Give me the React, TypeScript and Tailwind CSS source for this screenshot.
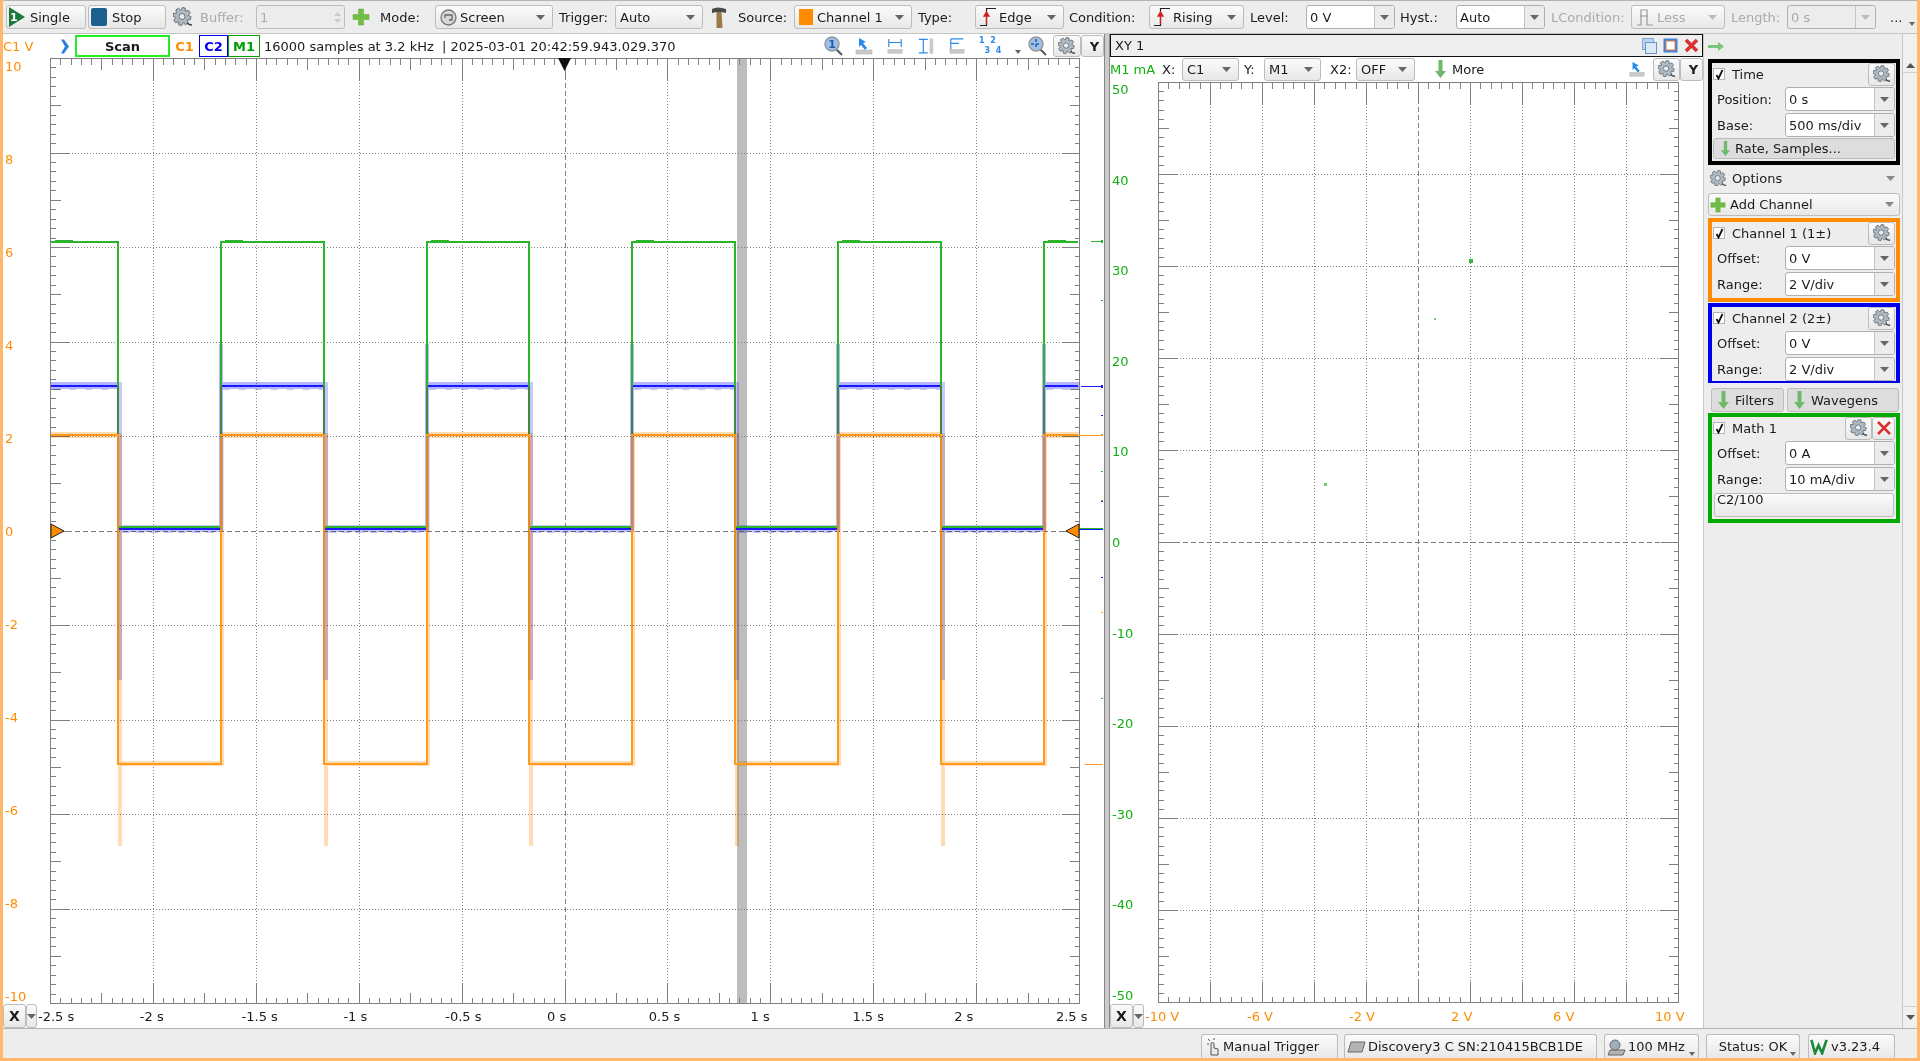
import React from 'react';

const range = (n: number) => Array.from({ length: n }, (_, i) => i);

function gearPath(cx: number, cy: number, ro: number, ri: number, teeth: number) {
  const pts: string[] = [];
  for (let i = 0; i < teeth; i++) {
    const a = (i / teeth) * Math.PI * 2 + 0.2;
    const w = Math.PI / teeth;
    [[a - w * 0.95, ri], [a - w * 0.45, ro], [a + w * 0.45, ro], [a + w * 0.95, ri]].forEach(([t, r]) => {
      pts.push(`${(cx + Math.cos(t) * r).toFixed(2)},${(cy + Math.sin(t) * r).toFixed(2)}`);
    });
  }
  return 'M' + pts.join('L') + 'Z';
}

const Gear = ({ s = 18 }: { s?: number }) => (
  <svg width={s} height={s} viewBox="0 0 20 20" className="shrink-0">
    <path d={gearPath(9, 9.500, 9, 6.300, 8)} fill="#aeb9c2" stroke="#66737d" strokeWidth="1" />
    <circle cx="9" cy="9.500" r="3" fill="#e8ecef" stroke="#66737d" strokeWidth="1" />
    <path d="M14 16q2 2 5 2" stroke="#444" strokeWidth="1.500" fill="none" />
  </svg>
);
const Caret = ({ c = '#666' }: { c?: string }) => (
  <svg width="9" height="5" viewBox="0 0 9 5" className="shrink-0"><path d="M0 0h9L4.500 5z" fill={c} /></svg>
);
const Check = () => (
  <span className="w-[12px] h-[12px] bg-white border border-[#b5b5b5] flex items-center justify-center shrink-0">
    <svg width="9" height="11" viewBox="0 0 9 11"><path d="M1.500 6l2 3.500L7.500 1" fill="none" stroke="#111" strokeWidth="1.800" /></svg>
  </span>
);
const Plus = ({ s = 18 }: { s?: number }) => (
  <svg width={s} height={s} viewBox="0 0 18 18" className="shrink-0"><path d="M6.500 1h5v5.500H17v5h-5.500V17h-5v-5.500H1v-5h5.500z" fill="#72bd45" stroke="#5da535" strokeWidth="0.500" /></svg>
);
const DownArrow = ({ h = 18 }: { h?: number }) => (
  <svg width="11" height={h} viewBox="0 0 11 18" className="shrink-0"><path d="M3.500 0h4v11H11l-5.500 7L0 11h3.500z" fill="#6fb96a" /></svg>
);
const Ruler = ({ x = 0 }: { x?: number }) => (
  <g transform={`translate(${x},0)`}>
    <rect x="0" y="13" width="16" height="4" fill="#c9c9c9" stroke="#aaa" strokeWidth="0.500" />
  </g>
);
const Magnify = ({ label }: { label?: string }) => (
  <svg width="20" height="20" viewBox="0 0 20 20" className="shrink-0 block">
    <path d="M12 13l6 6" stroke="#555" strokeWidth="2" />
    <circle cx="8" cy="8" r="7" fill="#9fbfe6" stroke="#9a9a9a" strokeWidth="1.500" />
    {label ? <text x="8" y="12" textAnchor="middle" fontSize="11" fontWeight="bold" fill="#1d5fae">{label}</text> : <path d="M8 3v10M3 8h10" stroke="#1d5fae" strokeWidth="1.500" strokeDasharray="3 2" />}
  </svg>
);
const Hammer = () => (
  <svg width="16" height="22" viewBox="0 0 16 22" className="shrink-0">
    <path d="M5.500 6h5l1 16h-6z" fill="#9a7a45" />
    <path d="M1 3q5-3 14 0v4q-7-2-14 0z" fill="#4b4b48" />
  </svg>
);
const StepIcon = () => (
  <svg width="16" height="20" viewBox="0 0 16 20" className="shrink-0">
    <path d="M0 18.500h6.500v-17H16" fill="none" stroke="#222" strokeWidth="1.200" />
    <path d="M6.500 17V8M4 9l2.500-4L9 9z" fill="#d02020" stroke="#d02020" strokeWidth="1.300" />
  </svg>
);
const SmallCaret = ({ className = '' }: { className?: string }) => (
  <svg width="6" height="4" viewBox="0 0 6 4" className={`block shrink-0 ${className}`}><path d="M0 0h6L3 4z" fill="#666" /></svg>
);

const Btn = ({ className = '', children }: { className?: string; children?: React.ReactNode }) => (
  <div className={`flex items-center shrink-0 rounded-[3px] border border-[#bcbcbc] bg-gradient-to-b from-[#fbfbfb] to-[#e8e8e8] ${className}`}>{children}</div>
);
const Combo = ({ className = '', children, off }: { className?: string; children?: React.ReactNode; off?: boolean }) => (
  <Btn className={`justify-between pl-[4px] pr-[7px] ${className}`}>
    <span className={`flex items-center gap-[3px] whitespace-nowrap ${off ? 'text-[#aaaaaa]' : ''}`}>{children}</span>
    <Caret c={off ? '#bbb' : '#666'} />
  </Btn>
);
const Edit = ({ className = '', children, off }: { className?: string; children?: React.ReactNode; off?: boolean }) => (
  <div className={`flex shrink-0 rounded-[3px] border border-[#b0b0b0] overflow-hidden ${off ? 'bg-[#ececec] text-[#aaaaaa]' : 'bg-white'} ${className}`}>
    <span className="flex-1 pl-[3px] flex items-center whitespace-nowrap">{children}</span>
    <span className="w-[20px] border-l border-[#c4c4c4] bg-[#ececec] flex items-center justify-center"><Caret c={off ? '#bbb' : '#666'} /></span>
  </div>
);
const Lbl = ({ className = '', children, off }: { className?: string; children: React.ReactNode; off?: boolean }) => (
  <span className={`shrink-0 whitespace-nowrap ${off ? 'text-[#aaaaaa]' : ''} ${className}`}>{children}</span>
);

const Axes = ({ x0, x1, y0, y1, dx, dy, xSub, xMid, color = '#808080' }: any) => {
  const els: React.ReactNode[] = [];
  range(11).forEach(i => {
    const x = x0 + i * dx, y = y0 + i * dy;
    if (i > 0 && i < 10) {
      els.push(<line key={`gv${i}`} x1={x} x2={x} y1={y0} y2={y1} stroke={color} strokeDasharray={i === 5 ? '5 3' : '1 2'} />);
      els.push(<line key={`gh${i}`} x1={x0} x2={x1} y1={y} y2={y} stroke={color} strokeDasharray={i === 5 ? '5 3' : '1 2'} />);
    }
  });
  const nx = 10 * xSub;
  range(nx + 1).forEach(i => {
    const x = x0 + (i * dx) / xSub;
    const len = i % xSub === 0 ? 21 : xMid && i % (xSub / 2) === 0 ? 11 : 6;
    els.push(<line key={`tt${i}`} x1={x} x2={x} y1={y0} y2={y0 + len} stroke={color} />);
    els.push(<line key={`tb${i}`} x1={x} x2={x} y1={y1} y2={y1 - len} stroke={color} />);
  });
  range(101).forEach(i => {
    const y = y0 + (i * dy) / 10;
    const len = i % 10 === 0 ? 18 : i % 5 === 0 ? 10 : 5;
    els.push(<line key={`tl${i}`} x1={x0} x2={x0 + len} y1={y} y2={y} stroke={color} />);
    els.push(<line key={`tr${i}`} x1={x1} x2={x1 - len} y1={y} y2={y} stroke={color} />);
  });
  els.push(<rect key="frame" x={x0} y={y0} width={x1 - x0} height={y1 - y0} fill="none" stroke={color} strokeWidth="1.200" />);
  return <g shapeRendering="crispEdges">{els}</g>;
};

const edges = range(10).map(k => Math.round(118 + 102.85 * k));
const levelPath = (hi: number, lo: number) => {
  let d = `M51 ${hi}`;
  edges.forEach((x, k) => {
    d += `H${x}V${k % 2 === 0 ? lo : hi}`;
  });
  return d + 'H1078';
};

const ScopeChart = () => {
  const hiSegs: [number, number][] = [[51, edges[0]]];
  const loSegs: [number, number][] = [];
  edges.forEach((x, k) => {
    const nx = k < 9 ? edges[k + 1] : 1079;
    (k % 2 === 0 ? loSegs : hiSegs).push([x, nx]);
  });
  const ylabels = [10, 8, 6, 4, 2, 0, -2, -4, -6, -8, -10];
  return (
    <svg width="1101" height="947" viewBox="3 57 1101 947" className="block shrink-0 bg-white">
      <rect x="737" y="58" width="10" height="945" fill="#bdbdbd" />
      <Axes x0={50.5} x1={1079.5} y0={58.5} y1={1003.5} dx={102.9} dy={94.5} xSub={10} xMid />
      {ylabels.map((v, i) => (
        <text key={v} x="5" y={66 + i * 93 + 5} fontSize="13" fill="#ff8c00" fontFamily="DejaVu Sans">{v}</text>
      ))}
      <g className="mix-blend-multiply" shapeRendering="crispEdges">
        {hiSegs.map(([a, b], i) => <rect key={`bh${i}`} x={a} y="382" width={b - a} height="7" fill="#b4b4ff" />)}
        {hiSegs.map(([a, b], i) => <line key={`bn${i}`} x1={a + 2} x2={b} y1="389.500" y2="389.500" stroke="#c4c4ff" strokeDasharray="7 9" />)}
        {loSegs.map(([a, b], i) => <rect key={`bl${i}`} x={a + 2} y="525" width={b - a - 2} height="7" fill="#c4c4ff" />)}
        {loSegs.map(([a, b], i) => <line key={`bm${i}`} x1={a + 4} x2={b} y1="532.500" y2="532.500" stroke="#c4c4ff" strokeDasharray="8 6" />)}
        {edges.map((x, k) => k % 2 === 0
          ? <rect key={`bv${k}`} x={x} y="382" width="4" height="298" fill="#c8c8ff" />
          : <rect key={`bv${k}`} x={x - 2} y="344" width="4" height="188" fill="#b4b4ff" />)}
      </g>
      <g className="mix-blend-multiply" shapeRendering="crispEdges">
        {hiSegs.map(([a, b], i) => <rect key={`oh${i}`} x={a} y="432" width={b - a} height="6" fill="#ffdcb4" />)}
        {loSegs.map(([a, b], i) => <rect key={`ol${i}`} x={a} y="761" width={b - a + 3} height="5" fill="#ffdcb4" />)}
        {edges.map((x, k) => k % 2 === 0
          ? <rect key={`ov${k}`} x={x} y="433" width="4" height="413" fill="#ffdcb4" />
          : <rect key={`ov${k}`} x={x - 1} y="433" width="4" height="333" fill="#ffdcb4" />)}
      </g>
      <g shapeRendering="crispEdges">
        <path d={levelPath(386, 529)} fill="none" stroke="#1a1aff" strokeWidth="2" />
        <path d={levelPath(242, 527)} fill="none" stroke="#2ab52a" strokeWidth="2" />
        {hiSegs.map(([a], i) => <rect key={`gb${i}`} x={a + 4} y="240" width="18" height="1" fill="#2ab52a" />)}
        {edges.map(x => <rect key={`gd${x}`} x={x - 1} y="386" width="2" height="49" fill="#3f8a3f" />)}
        <path d={edges.reduce((d, x, k) => d + `H${x}V${k % 2 === 0 ? 764 : 435}`, 'M51 435') + 'H1078'} fill="none" stroke="#ff9a1f" strokeWidth="2" />
        {edges.map((x, k) => k % 2 === 0 && <rect key={`od${x}`} x={x - 1} y="436" width="2" height="244" fill="#e68c20" />)}
        {edges.map((x, k) => k % 2 === 1 && <rect key={`oe${x}`} x={x - 1} y="436" width="2" height="94" fill="#d98a30" />)}
      </g>
      <g shapeRendering="crispEdges">
        <rect x="1091" y="241" width="12" height="1" fill="#2ab52a" /><rect x="1101" y="240" width="2" height="3" fill="#2ab52a" />
        <rect x="1101" y="300" width="2" height="1" fill="#2ab52a" />
        <rect x="1081" y="386" width="22" height="1" fill="#1a1aff" /><rect x="1101" y="385" width="2" height="3" fill="#1a1aff" />
        <rect x="1101" y="415" width="2" height="1" fill="#1a1aff" />
        <rect x="1079" y="435" width="24" height="1" fill="#ff9a1f" /><rect x="1101" y="434" width="2" height="2" fill="#ff9a1f" />
        <rect x="1101" y="471" width="2" height="1" fill="#2ab52a" />
        <rect x="1101" y="500" width="2" height="1" fill="#ff9a1f" /><rect x="1101" y="501" width="2" height="1" fill="#1a1aff" />
        <rect x="1079" y="528" width="24" height="1" fill="#2ab52a" /><rect x="1079" y="529" width="24" height="1" fill="#1a1aff" />
        <rect x="1101" y="577" width="2" height="1" fill="#1a1aff" />
        <rect x="1101" y="612" width="2" height="1" fill="#ff9a1f" />
        <rect x="1101" y="698" width="2" height="1" fill="#2ab52a" />
        <rect x="1085" y="764" width="18" height="1" fill="#ff9a1f" />
      </g>
      <path d="M558 58h13l-6.500 13z" fill="#111" />
      <path d="M51 524l13 7-13 7z" fill="#ff8c00" stroke="#222" />
      <path d="M1079 524l-13 7 13 7z" fill="#ff8c00" stroke="#222" />
    </svg>
  );
};

const XYChart = () => {
  const labels = [50, 40, 30, 20, 10, 0, -10, -20, -30, -40, -50];
  return (
    <svg width="593" height="923" viewBox="1110 81 593 923" className="block shrink-0 bg-white">
      <Axes x0={1158.5} x1={1678.5} y0={82.5} y1={1002.5} dx={52} dy={92} xSub={5} />
      {labels.map((v, i) => (
        <text key={v} x="1112" y={89 + i * 90.6 + 5} fontSize="13" fill="#10b010" fontFamily="DejaVu Sans">{v}</text>
      ))}
      <rect x="1469" y="259" width="4" height="4" fill="#38b838" />
      <rect x="1434" y="318" width="2" height="2" fill="#70cc70" />
      <rect x="1324" y="483" width="3" height="3" fill="#70cc70" />
      <rect x="1288" y="540" width="2" height="1" fill="#a0dda0" />
    </svg>
  );
};

const AxisBtn = () => (
  <div className="flex shrink-0 h-[24px]">
    <Btn className="w-[23px] h-full justify-center font-bold text-[14px]">X</Btn>
    <Btn className="w-[11px] h-full justify-center"><Caret /></Btn>
  </div>
);

const Row = ({ label, value }: { label: string; value: string }) => (
  <div className="flex items-center h-[26px] shrink-0">
    <span className="w-[73px] pl-[5px] shrink-0">{label}</span>
    <Edit className="w-[110px] h-[24px]">{value}</Edit>
  </div>
);

const GearBtn = () => <Btn className="w-[27px] h-[23px] justify-center"><Gear s={18} /></Btn>;

const Title = ({ children, actions }: { children: React.ReactNode; actions?: React.ReactNode }) => (
  <div className="flex items-center h-[23px] shrink-0 pl-[1px] pb-[1px]">
    <Check />
    <span className="ml-[7px] flex-1">{children}</span>
    {actions ?? <span className="mr-[1px]"><GearBtn /></span>}
  </div>
);

export default function App() {
  const sLabels = ['-2.5 s', '-2 s', '-1.5 s', '-1 s', '-0.5 s', '0 s', '0.5 s', '1 s', '1.5 s', '2 s', '2.5 s'];
  const xyLabels = ['-10 V', '-6 V', '-2 V', '2 V', '6 V', '10 V'];
  return (
    <div className="w-[1920px] h-[1061px] overflow-hidden flex flex-col bg-[#ededed] border-l-[3px] border-r-[3px] border-b-[3px] border-[#ffb86b] text-[13px] leading-none text-[#1a1a1a] font-['DejaVu_Sans',sans-serif]">
      {/* toolbar */}
      <div className="h-[34px] shrink-0 border-t border-t-[#b4b4b4] border-b border-b-[#c4c4c4] flex items-center">
        <Btn className="ml-[3px] w-[80px] h-[24px] gap-[4px] pl-[1px]">
          <svg width="18" height="20" viewBox="0 0 18 20"><path d="M1 0l16 10L1 20z" fill="#1e7a3c" /><text x="2" y="14" fontSize="11" fontWeight="bold" fill="#fff">1</text></svg>
          Single
        </Btn>
        <Btn className="ml-[2px] w-[78px] h-[24px] gap-[5px] pl-[2px]">
          <span className="w-[16px] h-[18px] bg-[#1d5f8f] rounded-[2px]" />Stop
        </Btn>
        <span className="ml-[7px] w-[27px] shrink-0"><Gear s={20} /></span>
        <Lbl off className="w-[56px]">Buffer:</Lbl>
        <div className="w-[89px] h-[24px] shrink-0 rounded-[3px] border border-[#bcbcbc] bg-[#ececec] text-[#aaaaaa] flex items-center justify-between pl-[3px] pr-[3px]">1<span className="flex flex-col gap-[3px]"><svg width="7" height="4" viewBox="0 0 7 4"><path d="M0 4h7L3.500 0z" fill="#ccc" /></svg><svg width="7" height="4" viewBox="0 0 7 4"><path d="M0 0h7L3.500 4z" fill="#ccc" /></svg></span></div>
        <span className="ml-[7px] w-[28px] shrink-0"><Plus /></span>
        <Lbl className="w-[55px]">Mode:</Lbl>
        <Combo className="w-[118px] h-[24px]">
          <svg width="17" height="17" viewBox="0 0 17 17"><circle cx="8.500" cy="8.500" r="7.500" fill="#d8d8d8" stroke="#777" strokeWidth="1.300" /><path d="M5 9V6h7v5H9" fill="none" stroke="#666" strokeWidth="1.300" /></svg>
          Screen
        </Combo>
        <Lbl className="ml-[6px] w-[56px]">Trigger:</Lbl>
        <Combo className="w-[88px] h-[24px]">Auto</Combo>
        <span className="ml-[8px] w-[27px] shrink-0"><Hammer /></span>
        <Lbl className="w-[56px]">Source:</Lbl>
        <Combo className="w-[118px] h-[24px]"><span className="w-[14px] h-[16px] bg-[#ff8c00] mr-[1px]" />Channel 1</Combo>
        <Lbl className="ml-[6px] w-[57px]">Type:</Lbl>
        <Combo className="w-[89px] h-[24px]"><StepIcon />Edge</Combo>
        <Lbl className="ml-[5px] w-[80px]">Condition:</Lbl>
        <Combo className="w-[95px] h-[24px]"><StepIcon />Rising</Combo>
        <Lbl className="ml-[6px] w-[56px]">Level:</Lbl>
        <Edit className="w-[89px] h-[24px]">0 V</Edit>
        <Lbl className="ml-[5px] w-[56px]">Hyst.:</Lbl>
        <Edit className="w-[89px] h-[24px]">Auto</Edit>
        <Lbl off className="ml-[6px] w-[80px]">LCondition:</Lbl>
        <Combo off className="w-[94px] h-[24px]"><svg width="18" height="20" viewBox="0 0 18 20"><path d="M1 18h4V3h6v15h6M4 9h8" fill="none" stroke="#999" strokeWidth="1.200" /></svg>Less</Combo>
        <Lbl off className="ml-[6px] w-[56px]">Length:</Lbl>
        <Edit off className="w-[89px] h-[24px]">0 s</Edit>
        <Lbl className="ml-[14px]">...</Lbl>
        <SmallCaret className="ml-[7px] mt-[14px]" />
      </div>

      {/* main */}
      <div className="h-[994px] shrink-0 flex">
        {/* scope */}
        <div className="w-[1101px] shrink-0 flex flex-col bg-white">
          <div className="h-[23px] shrink-0 flex items-center pt-[1px]">
            <Lbl className="w-[42px] text-[#ff8c00]">C1 V</Lbl>
            <span className="w-[30px] shrink-0 pl-[15px]"><svg width="10" height="15" viewBox="0 0 10 14" className="block"><path d="M1 0h3l5 7-5 7H1l4-7z" fill="#2b7fe0" /></svg></span>
            <span className="w-[95px] h-[22px] shrink-0 border-2 border-[#22ee22] font-bold flex items-center justify-center">Scan</span>
            <span className="w-[29px] shrink-0 text-center font-bold text-[#ff8c00]">C1</span>
            <span className="w-[29px] h-[22px] shrink-0 border border-[#0000ee] font-bold text-[#0000ee] flex items-center justify-center">C2</span>
            <span className="w-[32px] h-[22px] shrink-0 border border-[#00a000] font-bold text-[#00a000] flex items-center justify-center">M1</span>
            <span className="ml-[4px] whitespace-pre w-[560px] shrink-0">16000 samples at 3.2 kHz  | 2025-03-01 20:42:59.943.029.370</span>
            <span className="w-[31px] shrink-0"><Magnify label="1" /></span>
            <span className="w-[32px] shrink-0"><svg width="18" height="19" viewBox="0 0 18 19" className="block"><path d="M4 1v9l2-2 4 5 2-2-4-5 3-1z" fill="#2b8ae8" /><Ruler x={1} /></svg></span>
            <span className="w-[30px] shrink-0"><svg width="16" height="19" viewBox="0 0 18 19" className="block"><path d="M2 1v9M16 1v9M2 5h14" stroke="#2b8ae8" strokeWidth="1.300" fill="none" /><Ruler x={1} /></svg></span>
            <span className="w-[32px] shrink-0"><svg width="18" height="19" viewBox="0 0 20 20" className="block"><path d="M2 2h10M2 17h10M7 2v15" stroke="#2b8ae8" strokeWidth="1.300" fill="none" /><rect x="14" y="1" width="4" height="17" fill="#c9c9c9" /></svg></span>
            <span className="w-[30px] shrink-0"><svg width="16" height="19" viewBox="0 0 18 19" className="block"><path d="M2 1h14M2 1v12M2 6h9" stroke="#2b8ae8" strokeWidth="1.300" fill="none" /><Ruler x={1} /></svg></span>
            <span className="w-[36px] shrink-0 text-[#2b8ae8] text-[8px] font-bold leading-[10px] whitespace-pre">1  2{'\n'}  3  4</span>
            <span className="w-[13px] shrink-0 pt-[12px]"><SmallCaret /></span>
            <span className="w-[25px] shrink-0"><Magnify /></span>
            <Btn className="w-[28px] h-[22px] justify-center"><Gear s={18} /></Btn>
            <Btn className="w-[23px] h-[22px] justify-center font-bold pl-[4px]">Y</Btn>
          </div>
          <ScopeChart />
          <div className="h-[24px] flex items-center">
            <AxisBtn />
            <div className="flex ml-[1px]">
              {sLabels.map(s => <span key={s} className="w-[101.8px] shrink-0 whitespace-nowrap">{s}</span>)}
            </div>
          </div>
        </div>
        {/* splitter */}
        <div className="w-[6px] shrink-0 bg-[#cccccc] border-x border-[#888888]" />
        {/* xy */}
        <div className="w-[593px] shrink-0 flex flex-col bg-white">
          <div className="h-[23px] shrink-0 border border-[#111111] bg-[#eeeeee] flex items-center pl-[4px] pr-[3px]">
            <span className="flex-1">XY 1</span>
            <svg width="15" height="16" viewBox="0 0 15 16" className="mr-[6px]"><rect x="0.500" y="0.500" width="11" height="11" fill="#bcd4ee" stroke="#7aa7d8" /><rect x="3.500" y="4.500" width="11" height="11" fill="#dbe8f6" stroke="#5f97d3" /></svg>
            <svg width="15" height="15" viewBox="0 0 15 15" className="mr-[6px]"><rect x="0.500" y="0.500" width="14" height="14" fill="#3f86d8" /><rect x="3" y="3" width="9" height="9" fill="#fff" stroke="#ee7733" /></svg>
            <svg width="15" height="15" viewBox="0 0 15 15"><path d="M2 2l11 11M13 2L2 13" stroke="#d93030" strokeWidth="3.500" /></svg>
          </div>
          <div className="h-[24px] shrink-0 flex items-center">
            <Lbl className="w-[52px] text-[#10b010]">M1 mA</Lbl>
            <Lbl className="w-[20px]">X:</Lbl>
            <Combo className="w-[57px] h-[23px]">C1</Combo>
            <Lbl className="ml-[5px] w-[20px]">Y:</Lbl>
            <Combo className="w-[57px] h-[23px]">M1</Combo>
            <Lbl className="ml-[9px] w-[26px]">X2:</Lbl>
            <Combo className="w-[59px] h-[23px]">OFF</Combo>
            <span className="ml-[20px] w-[17px] shrink-0"><DownArrow /></span>
            <Lbl className="w-[177px]">More</Lbl>
            <span className="w-[24px] shrink-0"><svg width="16" height="19" viewBox="0 0 18 19" className="block"><path d="M4 1v9l2-2 4 5 2-2-4-5 3-1z" fill="#2b8ae8" /><Ruler x={1} /></svg></span>
            <Btn className="w-[27px] h-[23px] justify-center"><Gear s={18} /></Btn>
            <Btn className="w-[23px] h-[23px] justify-center font-bold pl-[4px]">Y</Btn>
          </div>
          <XYChart />
          <div className="h-[24px] flex items-center">
            <AxisBtn />
            <div className="flex ml-[1px]">
              {xyLabels.map(s => <span key={s} className="w-[102px] shrink-0 whitespace-nowrap text-[#ff8c00]">{s}</span>)}
            </div>
          </div>
        </div>
        {/* right panel */}
        <div className="flex-1 flex border-l border-[#c8c8c8]">
          <div className="w-[197px] shrink-0 flex flex-col pl-[4px] pr-[1px]">
            <div className="h-[25px] shrink-0 flex items-center">
              <svg width="16" height="9" viewBox="0 0 16 9"><path d="M0 3h10V0l6 4.500L10 9V6H0z" fill="#7cc47c" /></svg>
            </div>
            <div className="border-[4px] border-black flex flex-col shrink-0 h-[106px]">
              <Title>Time</Title>
              <Row label="Position:" value="0 s" />
              <Row label="Base:" value="500 ms/div" />
              <Btn className="h-[21px] mx-[1px] pl-[6px] gap-[4px] bg-none bg-[#dddddd]"><DownArrow h={15} />Rate, Samples...</Btn>
            </div>
            <div className="h-[28px] shrink-0 flex items-center pl-[2px] pr-[5px] pb-[2px]">
              <Gear s={17} /><span className="ml-[5px] flex-1">Options</span><Caret c="#888" />
            </div>
            <Btn className="h-[23px] pl-[1px] pr-[5px] gap-[4px]"><Plus s={16} /><span className="flex-1">Add Channel</span><Caret c="#888" /></Btn>
            <div className="h-[2px] shrink-0" />
            <div className="border-[4px] border-[#ff8c00] h-[84px] shrink-0 flex flex-col">
              <Title>Channel 1 (1±)</Title>
              <Row label="Offset:" value="0 V" />
              <Row label="Range:" value="2 V/div" />
            </div>
            <div className="h-[1px] shrink-0" />
            <div className="border-[4px] border-b-[2px] border-[#0000ee] h-[80px] shrink-0 flex flex-col">
              <Title>Channel 2 (2±)</Title>
              <Row label="Offset:" value="0 V" />
              <Row label="Range:" value="2 V/div" />
            </div>
            <div className="flex gap-[3px] pl-[3px] pr-[1px] h-[24px] mt-[5px] shrink-0">
              <Btn className="w-[73px] h-full gap-[6px] pl-[6px] bg-none bg-[#dddddd]"><DownArrow />Filters</Btn>
              <Btn className="flex-1 h-full gap-[6px] pl-[6px] bg-none bg-[#dddddd]"><DownArrow />Wavegens</Btn>
            </div>
            <div className="h-[1px] shrink-0" />
            <div className="border-[4px] border-[#00aa00] h-[110px] shrink-0 flex flex-col">
              <Title actions={<>
                <GearBtn />
                <Btn className="w-[23px] h-[23px] justify-center mr-[1px]"><svg width="14" height="14" viewBox="0 0 14 14"><path d="M1 1l12 12M13 1L1 13" stroke="#d93030" strokeWidth="2.500" /></svg></Btn>
              </>}>Math 1</Title>
              <Row label="Offset:" value="0 A" />
              <Row label="Range:" value="10 mA/div" />
              <div className="h-[24px] mx-[2px] mt-[1px] rounded-[3px] border border-[#bcbcbc] bg-gradient-to-b from-[#fbfbfb] to-[#e8e8e8] overflow-hidden pl-[2px] leading-[12px]"><span className="block">C2/100</span></div>
            </div>
          </div>
          <div className="w-[15px] ml-auto shrink-0 flex flex-col justify-between border-l border-[#c8c8c8] bg-[#f0f0f0] pt-[25px]">
            <div className="h-[14px] flex items-center justify-center border-b border-[#d0d0d0]"><svg width="9" height="5" viewBox="0 0 9 5"><path d="M0 5h9L4.500 0z" fill="#555" /></svg></div>
            <div className="h-[22px] flex items-center justify-center border-t border-[#d0d0d0]"><Caret c="#555" /></div>
          </div>
        </div>
      </div>

      {/* status bar */}
      <div className="flex-1 border-t border-[#b4b4b4] flex items-end">
        <Btn className="ml-[1198px] w-[137px] h-[24px] gap-[1px] pl-[4px] rounded-b-none border-b-0">
          <svg width="15" height="19" viewBox="0 0 15 19"><path d="M5 18V7a1.500 1.500 0 013 0v4l4 1v6z" fill="#e8e8e8" stroke="#555" /><path d="M2 2l2 2M8 1v2M1 7h2" stroke="#555" /></svg>
          <span className="ml-[1px]">Manual Trigger</span>
        </Btn>
        <Btn className="ml-[6px] w-[253px] h-[24px] gap-[2px] pl-[2px] rounded-b-none border-b-0">
          <svg width="19" height="12" viewBox="0 0 19 12"><path d="M4 1h14l-3 10H1z" fill="#b4b4b4" stroke="#666" /></svg>
          Discovery3 C SN:210415BCB1DE
        </Btn>
        <Btn className="ml-[7px] w-[95px] h-[24px] gap-[2px] pl-[2px] rounded-b-none border-b-0 relative">
          <svg width="19" height="18" viewBox="0 0 19 18"><path d="M3 12h15l-2 5H1z" fill="#b4b4b4" stroke="#666" /><circle cx="8" cy="7" r="5" fill="#9fb0bb" stroke="#667" /></svg>
          100 MHz
          <SmallCaret className="absolute right-[3px] bottom-[2px]" />
        </Btn>
        <Btn className="ml-[7px] w-[94px] h-[24px] justify-center rounded-b-none border-b-0 relative">
          Status: OK
          <SmallCaret className="absolute right-[3px] bottom-[2px]" />
        </Btn>
        <Btn className="ml-[8px] w-[87px] h-[24px] gap-[3px] pl-[1px] rounded-b-none border-b-0">
          <svg width="18" height="16" viewBox="0 0 19 18"><path d="M1 1l4 15 4-9 4 9 5-15" fill="none" stroke="#1f8a3c" strokeWidth="3" /></svg>
          v3.23.4
        </Btn>
      </div>
    </div>
  );
}
